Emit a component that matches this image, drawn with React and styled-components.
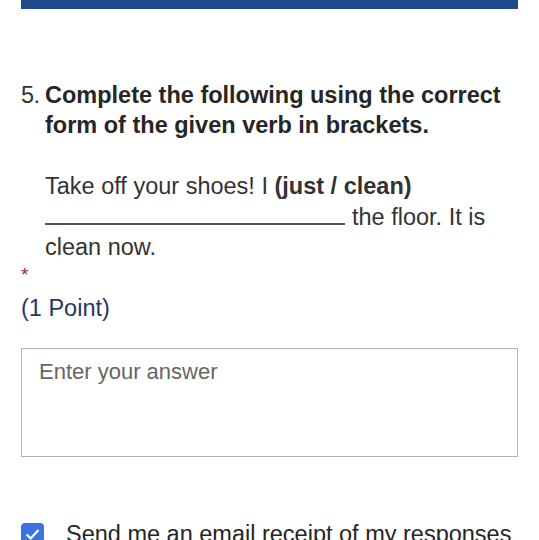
import React from "react";
import styled, { createGlobalStyle } from "styled-components";

const Global = createGlobalStyle`
  html, body { margin: 0; padding: 0; background: #fff; }
  body { font-family: "Liberation Sans", Arial, sans-serif; color: #333; }
`;

const Page = styled.div`
  width: 539px;
  height: 540px;
  overflow: hidden;
  padding: 0 21px;
  box-sizing: border-box;
`;

const TopBar = styled.div`
  height: 9px;
  background: #1f4a8a;
`;

const Question = styled.div`
  margin-top: 71px;
  display: flex;
`;

const Number = styled.div`
  width: 24px;
  flex: none;
  font-size: 23.5px;
  line-height: 30px;
  color: #333;
  letter-spacing: -0.5px;
`;

const Title = styled.div`
  font-size: 23.5px;
  line-height: 30px;
  font-weight: bold;
  color: #262626;
`;

const Body = styled.div`
  margin: 31px 0 0 24px;
  font-size: 23.5px;
  line-height: 30px;
  color: #333;
`;

const Blank = styled.span`
  display: inline-block;
  width: 300px;
  height: 22px;
  border-bottom: 2px solid #555;
  vertical-align: baseline;
  margin-right: 7px;
`;

const Required = styled.div`
  color: #a4262c;
  font-size: 19px;
  line-height: 20px;
  margin-top: 3px;
`;

const Points = styled.div`
  color: #1f3864;
  font-size: 23.5px;
  line-height: 30px;
  margin-top: 8px;
`;

const AnswerBox = styled.div`
  margin-top: 25px;
  height: 109px;
  border: 1.5px solid #b3b3b3;
  box-sizing: border-box;
  padding: 10px 17px;
  font-size: 22px;
  line-height: 26px;
  color: #666;
`;

const ReceiptRow = styled.div`
  margin-top: 63px;
  display: flex;
  align-items: center;
  gap: 22px;
  font-size: 23.5px;
  line-height: 28px;
  color: #262626;
`;

const Check = styled.div`
  width: 23px;
  height: 23px;
  border-radius: 4px;
  background: #3b73e3;
  display: flex;
  align-items: center;
  justify-content: center;
  flex: none;
`;

export default function App() {
  return (
    <>
      <Global />
      <Page>
        <TopBar />
        <Question>
          <Number>5.</Number>
          <Title>Complete the following using the correct form of the given verb in brackets.</Title>
        </Question>
        <Body>
          Take off your shoes! I <b>(just / clean)</b> <Blank />the floor. It is clean now.
        </Body>
        <Required>*</Required>
        <Points>(1 Point)</Points>
        <AnswerBox>Enter your answer</AnswerBox>
        <ReceiptRow>
          <Check>
            <svg width="17" height="17" viewBox="0 0 16 16">
              <path d="M3 8.5l3.2 3.2L13 4.5" fill="none" stroke="#fff" strokeWidth="2.2" strokeLinecap="round" strokeLinejoin="round" />
            </svg>
          </Check>
          Send me an email receipt of my responses
        </ReceiptRow>
      </Page>
    </>
  );
}
